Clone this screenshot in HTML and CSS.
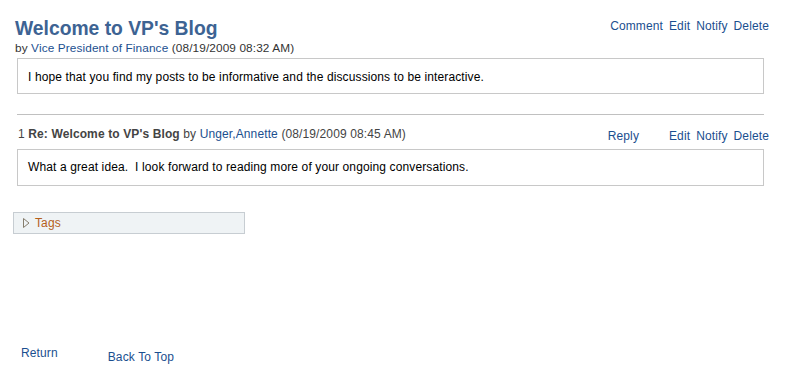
FILE: index.html
```html
<!DOCTYPE html>
<html lang="en">
<head>
    <meta charset="UTF-8">
    <title>Welcome to VP's Blog</title>
    <link rel="stylesheet" href="styles.css">
</head>
<body>
    <div class="page">
        <div class="post-head">
            <div>
                <h1 class="title">Welcome to VP's Blog</h1>
                <div class="byline">by <a href="#">Vice President of Finance</a> (08/19/2009 08:32 AM)</div>
            </div>
            <div class="actions">
                <a href="#">Comment</a>
                <a href="#">Edit</a>
                <a href="#">Notify</a>
                <a href="#">Delete</a>
            </div>
        </div>
        <div class="box">I hope that you find my posts to be informative and the discussions to be interactive.</div>

        <hr class="divider">

        <div class="reply-head">
            <div class="reply-meta">1 <b>Re: Welcome to VP's Blog</b> by <a href="#">Unger,Annette</a> (08/19/2009 08:45 AM)</div>
            <div class="actions">
                <a href="#" class="reply-link">Reply</a>
                <a href="#">Edit</a>
                <a href="#">Notify</a>
                <a href="#">Delete</a>
            </div>
        </div>
        <div class="box reply-box">What a great idea.&nbsp; I look forward to reading more of your ongoing conversations.</div>

        <div class="tags">
            <svg class="arrow" width="7" height="10" viewBox="0 0 7 10">
                <path d="M0.5 0.5 L6 5 L0.5 9.5 Z" fill="none" stroke="#857c6c" stroke-width="1"/>
            </svg>
            <a href="#">Tags</a>
        </div>

        <div class="footer-links">
            <a href="#" class="return">Return</a>
            <a href="#" class="top">Back To Top</a>
        </div>
    </div>
</body>
</html>
```

FILE: styles.css
```css
body {
    margin: 0;
    font-family: Arial, "Liberation Sans", sans-serif;
    font-size: 12px;
    letter-spacing: 0.12px;
    color: #000;
    background-color: #fff;
}

a {
    color: #1b4f8f;
    text-decoration: none;
}

.page {
    width: 747px;
    padding: 17px 0 0 17px;
}

.post-head {
    display: flex;
    justify-content: space-between;
    align-items: flex-start;
}

.title {
    margin: 0 0 0 -2px;
    font-size: 19.3px;
    line-height: 24px;
    letter-spacing: 0;
    color: #3d6393;
}

.byline {
    font-size: 11.8px;
    line-height: 14px;
    color: #333;
    margin-left: -2px;
}

.actions {
    display: flex;
    gap: 6px;
    margin-top: 2px;
    font-size: 12px;
    line-height: 14px;
    margin-right: -5px;
}

.box {
    margin-top: 3px;
    border: 1px solid #c8c8c8;
    padding: 11px 10px 9px;
    line-height: 14px;
}

.divider {
    margin: 20px 0 0;
    border: none;
    border-top: 1px solid #c0c0c0;
    height: 0;
}

.reply-head {
    display: flex;
    justify-content: space-between;
    margin-top: 12px;
}

.reply-meta {
    font-size: 12px;
    line-height: 14px;
    color: #444;
    margin-left: 1px;
}

.reply-meta b {
    color: #444;
}

.reply-link {
    margin-right: 24px;
}

.reply-box {
    margin-top: 6px;
    padding: 10px 10px 11px;
}

.tags {
    display: flex;
    align-items: center;
    gap: 5px;
    width: 221px;
    height: 20px;
    margin: 26px 0 0 -4px;
    padding-left: 9px;
    border: 1px solid #c7cdd2;
    background-color: #eff3f5;
}

.tags a {
    color: #b5601b;
}

.footer-links {
    display: flex;
    margin-top: 112px;
    font-size: 12px;
}

.return {
    margin-left: 4px;
}

.top {
    margin-left: 50px;
    margin-top: 4px;
}
```
